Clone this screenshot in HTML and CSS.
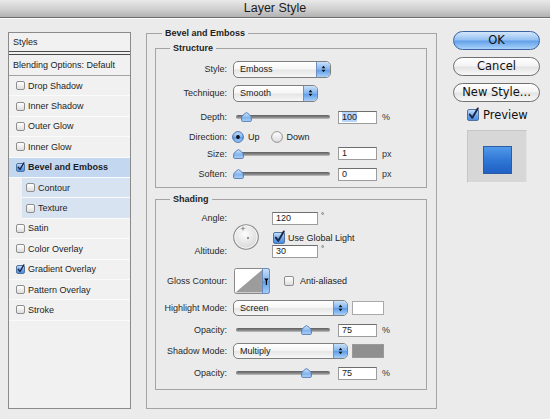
FILE: index.html
```html
<!DOCTYPE html>
<html>
<head>
<meta charset="utf-8">
<title>Layer Style</title>
<link rel="stylesheet" href="styles.css">
</head>
<body>
<svg class="defs" width="0" height="0" aria-hidden="true">
  <defs>
    <linearGradient id="blueV" x1="0" y1="0" x2="0" y2="1">
      <stop offset="0" stop-color="#c9e0fa"/>
      <stop offset="0.5" stop-color="#7eb2ee"/>
      <stop offset="0.51" stop-color="#5a9ae6"/>
      <stop offset="1" stop-color="#a8d0f8"/>
    </linearGradient>
    <linearGradient id="knobG" x1="0" y1="0" x2="0" y2="1">
      <stop offset="0" stop-color="#d6e8fb"/>
      <stop offset="0.6" stop-color="#7fb2ec"/>
      <stop offset="1" stop-color="#b9d8f8"/>
    </linearGradient>
    <linearGradient id="radioOff" x1="0" y1="0" x2="0" y2="1">
      <stop offset="0" stop-color="#ffffff"/>
      <stop offset="1" stop-color="#dcdcdc"/>
    </linearGradient>
    <radialGradient id="dialG" cx="45%" cy="38%" r="65%">
      <stop offset="0" stop-color="#fdfdfd"/>
      <stop offset="1" stop-color="#d5d5d5"/>
    </radialGradient>
  </defs>
</svg>
<div class="dialog">
  <div class="titlebar">Layer Style</div>
  <div class="content">

    <div class="styles-list">
      <div class="list-head">Styles</div>
      <div class="list-blend">Blending Options: Default</div>
      <div class="item"><span class="cb"></span>Drop Shadow</div>
      <div class="item"><span class="cb"></span>Inner Shadow</div>
      <div class="item"><span class="cb"></span>Outer Glow</div>
      <div class="item"><span class="cb"></span>Inner Glow</div>
      <div class="item selected"><span class="cb checked"><svg viewBox="0 0 10 10"><path d="M1.8 4.6 L4.3 7.8 L9.8 -1.6" fill="none" stroke="#1b2545" stroke-width="1.9" stroke-linecap="round" stroke-linejoin="round"/></svg></span>Bevel and Emboss</div>
      <div class="item sub"><span class="cb"></span>Contour</div>
      <div class="item sub"><span class="cb"></span>Texture</div>
      <div class="item"><span class="cb"></span>Satin</div>
      <div class="item"><span class="cb"></span>Color Overlay</div>
      <div class="item"><span class="cb checked"><svg viewBox="0 0 10 10"><path d="M1.8 4.6 L4.3 7.8 L9.8 -1.6" fill="none" stroke="#1b2545" stroke-width="1.9" stroke-linecap="round" stroke-linejoin="round"/></svg></span>Gradient Overlay</div>
      <div class="item"><span class="cb"></span>Pattern Overlay</div>
      <div class="item"><span class="cb"></span>Stroke</div>
    </div>

    <fieldset class="group main-group">
      <legend>Bevel and Emboss</legend>

      <fieldset class="group structure">
        <legend>Structure</legend>
        <div class="row">
          <span class="lbl">Style:</span>
          <div class="popup w-style"><span class="val">Emboss</span><span class="arrows"><svg viewBox="0 0 7 10"><path d="M3.5 0.5 L6.2 3.8 H0.8 Z M3.5 9.5 L6.2 6.2 H0.8 Z" fill="#111"/></svg></span></div>
        </div>
        <div class="row">
          <span class="lbl">Technique:</span>
          <div class="popup w-tech"><span class="val">Smooth</span><span class="arrows"><svg viewBox="0 0 7 10"><path d="M3.5 0.5 L6.2 3.8 H0.8 Z M3.5 9.5 L6.2 6.2 H0.8 Z" fill="#111"/></svg></span></div>
        </div>
        <div class="row">
          <span class="lbl">Depth:</span>
          <div class="slider"><div class="track"></div><svg class="knob" style="left:8px" viewBox="0 0 11 10"><path d="M5.5 0.6 C7.6 1.6 10.4 4 10.4 5.8 L10.4 8.4 Q10.4 9.4 9.4 9.4 L1.6 9.4 Q0.6 9.4 0.6 8.4 L0.6 5.8 C0.6 4 3.4 1.6 5.5 0.6 Z" fill="url(#knobG)" stroke="#4a74b4" stroke-width="0.9"/></svg></div>
          <span class="field"><span class="selected-text">100</span></span><span class="unit">%</span>
        </div>
        <div class="row tight">
          <span class="lbl">Direction:</span>
          <svg class="radio first" viewBox="0 0 12 12"><circle cx="6" cy="6" r="5.4" fill="url(#blueV)" stroke="#3d67a8" stroke-width="0.9"/><circle cx="6" cy="6" r="1.9" fill="#111"/></svg>
          <span class="opt">Up</span>
          <svg class="radio" viewBox="0 0 12 12"><circle cx="6" cy="6" r="5.4" fill="url(#radioOff)" stroke="#8a8a8a" stroke-width="0.9"/></svg>
          <span class="opt">Down</span>
        </div>
        <div class="row tight">
          <span class="lbl">Size:</span>
          <div class="slider"><div class="track"></div><svg class="knob" style="left:0px" viewBox="0 0 11 10"><path d="M5.5 0.6 C7.6 1.6 10.4 4 10.4 5.8 L10.4 8.4 Q10.4 9.4 9.4 9.4 L1.6 9.4 Q0.6 9.4 0.6 8.4 L0.6 5.8 C0.6 4 3.4 1.6 5.5 0.6 Z" fill="url(#knobG)" stroke="#4a74b4" stroke-width="0.9"/></svg></div>
          <span class="field">1</span><span class="unit">px</span>
        </div>
        <div class="row">
          <span class="lbl">Soften:</span>
          <div class="slider"><div class="track"></div><svg class="knob" style="left:0px" viewBox="0 0 11 10"><path d="M5.5 0.6 C7.6 1.6 10.4 4 10.4 5.8 L10.4 8.4 Q10.4 9.4 9.4 9.4 L1.6 9.4 Q0.6 9.4 0.6 8.4 L0.6 5.8 C0.6 4 3.4 1.6 5.5 0.6 Z" fill="url(#knobG)" stroke="#4a74b4" stroke-width="0.9"/></svg></div>
          <span class="field">0</span><span class="unit">px</span>
        </div>
      </fieldset>

      <fieldset class="group shading">
        <legend>Shading</legend>
        <div class="angle-block">
          <div class="angle-labels"><span>Angle:</span><span>Altitude:</span></div>
          <svg class="dial" viewBox="0 0 26 26">
            <circle cx="13" cy="13" r="12.3" fill="url(#dialG)" stroke="#8c8c8c" stroke-width="1.1"/>
            <circle cx="13" cy="13" r="11.1" fill="none" stroke="#ffffff" stroke-width="0.7"/>
            <path d="M10 2.2 V6.8 M7.7 4.5 H12.3" stroke="#a0a0a0" stroke-width="0.8"/>
            <circle cx="10" cy="4.5" r="0.9" fill="#888"/>
            <circle cx="15" cy="14" r="1" fill="#777"/>
          </svg>
          <div class="angle-fields">
            <div class="field-row"><span class="field wide">120</span><span class="deg">°</span></div>
            <div class="check-row"><span class="cb big checked"><svg viewBox="0 0 10 10"><path d="M1.8 4.6 L4.3 7.8 L9.8 -1.6" fill="none" stroke="#1b2545" stroke-width="1.9" stroke-linecap="round" stroke-linejoin="round"/></svg></span><span class="check-label">Use Global Light</span></div>
            <div class="field-row last"><span class="field wide">30</span><span class="deg">°</span></div>
          </div>
        </div>
        <div class="row gloss">
          <span class="lbl">Gloss Contour:</span>
          <svg class="contour" viewBox="0 0 36 26">
            <rect x="0.5" y="0.5" width="35" height="25" rx="2" fill="#ffffff" stroke="#8a8a8a"/>
            <path d="M1.5 24.5 L28.5 1.5 L28.5 24.5 Z" fill="#9c9c9c"/>
            <path d="M28.5 0.5 H33.5 Q35.5 0.5 35.5 2.5 V23.5 Q35.5 25.5 33.5 25.5 H28.5 Z" fill="url(#blueV)" stroke="#6a8bc0"/>
            <path d="M30.2 10.5 H34.6 L32.4 13.8 Z" fill="#000"/>
            <path d="M32.4 13 V17" stroke="#000" stroke-width="1.1"/>
          </svg>
          <span class="cb anti"></span><span class="check-label wide-gap">Anti-aliased</span>
        </div>
        <div class="row mode">
          <span class="lbl">Highlight Mode:</span>
          <div class="popup w-mode"><span class="val">Screen</span><span class="arrows"><svg viewBox="0 0 7 10"><path d="M3.5 0.5 L6.2 3.8 H0.8 Z M3.5 9.5 L6.2 6.2 H0.8 Z" fill="#111"/></svg></span></div>
          <span class="color-swatch light"></span>
        </div>
        <div class="row slim">
          <span class="lbl">Opacity:</span>
          <div class="slider"><div class="track"></div><svg class="knob" style="left:68px" viewBox="0 0 11 10"><path d="M5.5 0.6 C7.6 1.6 10.4 4 10.4 5.8 L10.4 8.4 Q10.4 9.4 9.4 9.4 L1.6 9.4 Q0.6 9.4 0.6 8.4 L0.6 5.8 C0.6 4 3.4 1.6 5.5 0.6 Z" fill="url(#knobG)" stroke="#4a74b4" stroke-width="0.9"/></svg></div>
          <span class="field">75</span><span class="unit">%</span>
        </div>
        <div class="row mode">
          <span class="lbl">Shadow Mode:</span>
          <div class="popup w-mode"><span class="val">Multiply</span><span class="arrows"><svg viewBox="0 0 7 10"><path d="M3.5 0.5 L6.2 3.8 H0.8 Z M3.5 9.5 L6.2 6.2 H0.8 Z" fill="#111"/></svg></span></div>
          <span class="color-swatch dark"></span>
        </div>
        <div class="row slim">
          <span class="lbl">Opacity:</span>
          <div class="slider"><div class="track"></div><svg class="knob" style="left:68px" viewBox="0 0 11 10"><path d="M5.5 0.6 C7.6 1.6 10.4 4 10.4 5.8 L10.4 8.4 Q10.4 9.4 9.4 9.4 L1.6 9.4 Q0.6 9.4 0.6 8.4 L0.6 5.8 C0.6 4 3.4 1.6 5.5 0.6 Z" fill="url(#knobG)" stroke="#4a74b4" stroke-width="0.9"/></svg></div>
          <span class="field">75</span><span class="unit">%</span>
        </div>
      </fieldset>
    </fieldset>

    <div class="actions">
      <div class="btn primary">OK</div>
      <div class="btn">Cancel</div>
      <div class="btn">New Style...</div>
      <div class="preview"><span class="cb big checked"><svg viewBox="0 0 10 10"><path d="M1.8 4.6 L4.3 7.8 L9.8 -1.6" fill="none" stroke="#1b2545" stroke-width="1.9" stroke-linecap="round" stroke-linejoin="round"/></svg></span><span class="preview-label">Preview</span></div>
      <div class="preview-box"><div class="preview-swatch"></div></div>
    </div>

  </div>
</div>
</body>
</html>
```

FILE: styles.css
```css
* { box-sizing: border-box; }

html, body {
  margin: 0;
  padding: 0;
}

body {
  width: 550px;
  height: 419px;
  overflow: hidden;
  background: #ebebeb;
  font-family: "Liberation Sans", Arial, sans-serif;
  font-size: 9px;
  color: #222;
}

.defs {
  display: block;
  width: 0;
  height: 0;
  overflow: hidden;
}

.dialog {
  width: 550px;
  height: 419px;
  background: #ebebeb;
}

/* Title bar */
.titlebar {
  height: 18px;
  background: linear-gradient(#e9e9e9, #cfcfcf 55%, #b2b2b2);
  border-bottom: 1px solid #6c6c6c;
  box-shadow: 0 1px 0 #fbfbfb;
  text-align: center;
  font-size: 12.5px;
  line-height: 17px;
  color: #1c1c1c;
}

.content {
  display: flex;
  align-items: flex-start;
}

/* Styles list */
.styles-list {
  margin: 14px 0 0 8px;
  width: 123px;
  height: 377px;
  border: 1px solid #8a8a8a;
  background: #f1f1f1;
}

.list-head {
  height: 22px;
  padding-left: 4px;
  line-height: 18px;
  border-bottom: 4px double #4b4b4b;
}

.list-blend {
  height: 21px;
  padding-left: 4px;
  line-height: 20px;
  border-bottom: 1px solid #a3a3a3;
}

.item {
  display: flex;
  align-items: center;
  height: 20.4px;
  padding-left: 7px;
  border-bottom: 1px solid #fbfbfb;
  color: #1d1d1d;
}

.item.selected {
  background: #c4d7f1;
  font-weight: bold;
}

.item.sub {
  margin-left: 13px;
  padding-left: 4px;
  background: #d8e3f2;
}

.cb {
  flex: none;
  display: block;
  width: 9px;
  height: 9px;
  margin-right: 3px;
  border: 1px solid #8e8e8e;
  border-radius: 2px;
  background: linear-gradient(#ffffff, #dedede);
}

.cb.checked {
  background: linear-gradient(#c4def9, #6fa7ea 55%, #4a8de2);
  border-color: #50739f;
}

.cb svg {
  display: block;
  width: 100%;
  height: 100%;
  overflow: visible;
}

.cb.big {
  width: 12px;
  height: 12px;
}

/* Fieldsets */
.group {
  margin: 0;
  min-width: 0;
  border: 1px solid #a4a4a4;
}

.group legend {
  padding: 0 3px;
  font-weight: bold;
  font-size: 9px;
  line-height: 12px;
  color: #1e1e1e;
}

.main-group {
  margin: 9px 0 0 15px;
  width: 291px;
  height: 382px;
  padding: 3px 9px 0 8px;
}

.main-group > legend {
  margin-left: 7px;
}

.structure,
.shading {
  width: 272px;
  padding: 0;
}

.structure > legend,
.shading > legend {
  margin-left: 14px;
}

.structure {
  height: 146px;
  padding-top: 3px;
}

.shading {
  margin-top: 5px;
  height: 197px;
  padding-top: 7px;
}

/* Rows */
.row {
  display: flex;
  align-items: center;
  height: 24px;
}

.row.tight { height: 16.5px; }

.lbl {
  flex: none;
  width: 71px;
  text-align: right;
  color: #2a2a2a;
}

/* Popup buttons */
.popup {
  flex: none;
  display: flex;
  margin-left: 6px;
  height: 17px;
  border: 1px solid #7f7f7f;
  border-radius: 5px;
  background: linear-gradient(#ffffff, #f6f6f6 45%, #e6e6e6 55%, #f7f7f7);
  overflow: hidden;
}

.popup .val {
  flex: 1;
  padding-left: 6px;
  line-height: 15px;
  color: #1a1a1a;
}

.popup .arrows {
  flex: none;
  display: flex;
  align-items: center;
  justify-content: center;
  width: 14px;
  border-left: 1px solid #6f8fbf;
  background: linear-gradient(#c9e0fa, #7eb2ee 50%, #5a9ae6 51%, #a8d0f8);
}

.popup .arrows svg {
  width: 5px;
  height: 8px;
}

.w-style { width: 98px; }
.w-tech { width: 85px; }
.w-mode { width: 115px; height: 16px; }
.w-mode .val { line-height: 14px; }

/* Sliders */
.slider {
  flex: none;
  position: relative;
  margin-left: 6px;
  width: 97px;
  height: 10px;
}

.track {
  margin: 3px 0 0 3px;
  height: 4px;
  border-radius: 2px;
  background: linear-gradient(#5f5f5f, #8a8a8a 60%, #c4c4c4);
}

.knob {
  position: absolute;
  top: 0;
  width: 11px;
  height: 10px;
}

.field {
  flex: none;
  display: block;
  margin-left: 8px;
  width: 39px;
  height: 13px;
  padding-left: 3px;
  border: 1px solid #9c9c9c;
  border-top-color: #6e6e6e;
  background: #fff;
  line-height: 11px;
  color: #1a1a1a;
}

.selected-text {
  background: #b6d4fb;
}

.unit {
  margin-left: 5px;
  color: #333;
}

/* Radios */
.radio {
  flex: none;
  width: 12px;
  height: 12px;
  margin-left: 11px;
}

.radio.first { margin-left: 5px; }

.opt {
  margin-left: 4px;
  color: #222;
}

/* Angle */
.angle-block {
  display: flex;
  height: 46px;
}

.angle-labels {
  flex: none;
  width: 71px;
  display: flex;
  flex-direction: column;
  justify-content: space-between;
  text-align: right;
  line-height: 13px;
  color: #2a2a2a;
}

.dial {
  flex: none;
  margin: 12px 0 0 6px;
  width: 26px;
  height: 26px;
}

.angle-fields {
  margin-left: 13px;
  display: flex;
  flex-direction: column;
}

.field-row {
  display: flex;
  height: 13px;
}

.field-row.last { margin-top: 1px; }

.field.wide {
  margin-left: 0;
  width: 46px;
}

.deg {
  margin-left: 3px;
  font-size: 8px;
  line-height: 8px;
}

.check-row {
  display: flex;
  align-items: center;
  margin-top: 6px;
  height: 13px;
  padding-left: 1px;
}

.check-label {
  margin-left: 0;
  color: #222;
}

.check-row .cb { margin-right: 3px; }

/* Gloss */
.row.gloss {
  height: 26px;
  margin-top: 10px;
}

.contour {
  flex: none;
  margin-left: 7px;
  width: 36px;
  height: 26px;
}

.cb.anti {
  width: 10px;
  height: 10px;
  margin: 0 0 0 14px;
}

.check-label.wide-gap { margin-left: 6px; }

.row.mode {
  height: 16px;
  margin-top: 6px;
}

.row.slim {
  height: 14px;
  margin-top: 7px;
}

.color-swatch {
  flex: none;
  display: block;
  margin-left: 4px;
  width: 32px;
  height: 14px;
  border: 1px solid #a9a9a9;
}

.color-swatch.light { background: #ffffff; }
.color-swatch.dark { background: #8f8f8f; border-color: #9a9a9a; }

/* Actions */
.actions {
  flex: none;
  margin: 13px 0 0 16px;
  width: 87px;
  display: flex;
  flex-direction: column;
  font-family: "DejaVu Sans", "Liberation Sans", sans-serif;
}

.btn {
  height: 19px;
  margin-bottom: 7px;
  border: 1px solid #707070;
  border-radius: 10px;
  background: linear-gradient(#ffffff, #f3f3f3 48%, #e3e3e3 52%, #f8f8f8);
  text-align: center;
  font-size: 11.5px;
  line-height: 17px;
  color: #111;
}

.btn.primary {
  border-color: #3c63a0;
  background: linear-gradient(#d2e6fc, #93c0f2 48%, #619fe9 52%, #a9d3fb);
}

.preview {
  display: flex;
  align-items: center;
  margin: -1px 0 0 14px;
  height: 13px;
}

.preview .cb { margin-right: 4px; }

.preview-label {
  font-size: 11.5px;
  color: #111;
}

.preview-box {
  margin: 9px 0 0 14px;
  width: 60px;
  height: 53px;
  padding: 15px 0 0 15px;
  background: #d7d7d7;
  border: 1px solid;
  border-color: #c6c6c6 #e4e4e4 #ededed #c6c6c6;
}

.preview-swatch {
  width: 29px;
  height: 28px;
  border: 1px solid #2d5ca5;
  background: linear-gradient(#5199ea, #3078d6 50%, #1f60c4);
}
```
